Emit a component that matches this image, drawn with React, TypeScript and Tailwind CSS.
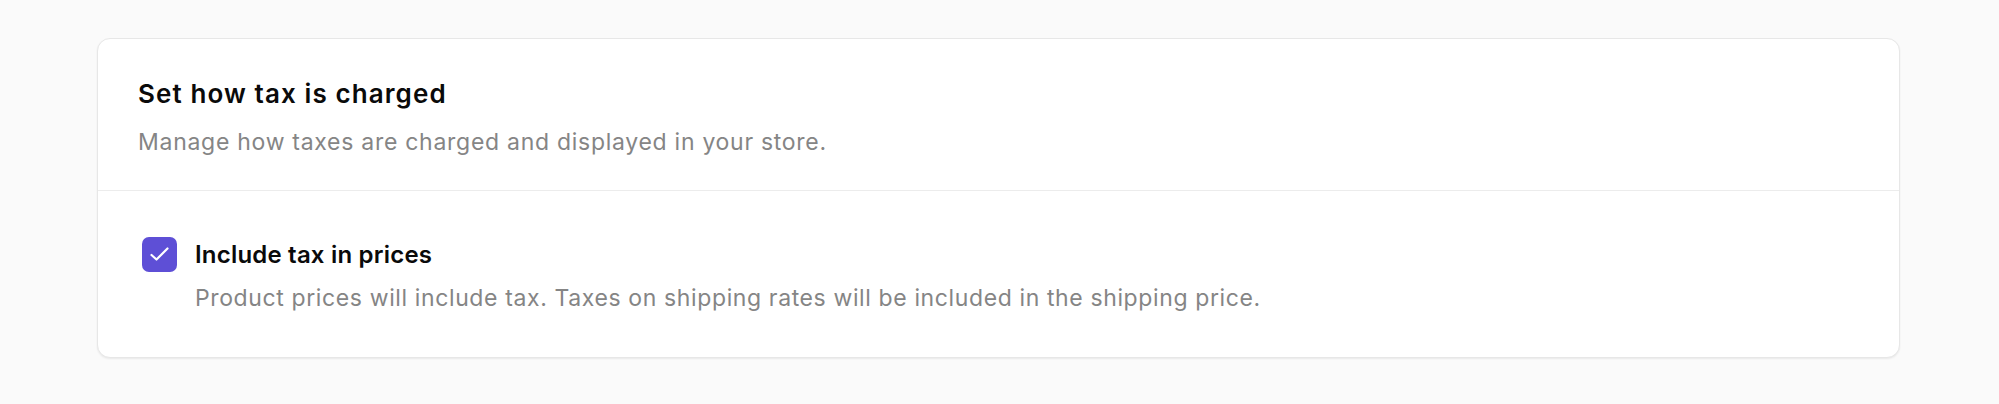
import React from 'react';

const CheckIcon: React.FC = () => (
    <svg width="35" height="35" viewBox="0 0 35 35" fill="none">
        <path d="M9.5 18L14.5 22.5L25.5 11.5" stroke="white" strokeWidth="2.2" strokeLinecap="round" strokeLinejoin="round" />
    </svg>
);

const TaxSettingsCard: React.FC = () => {
    return (
        <div className="bg-white border border-[#e7e7e7] rounded-[13px] shadow-[0_1px_2px_rgba(0,0,0,0.07)]">
            {/* Header */}
            <div className="px-[40px] pt-[38px] pb-[32px] border-b border-[#ececec]">
                <h2 className="text-[26px] leading-[34px] font-semibold text-[#0a0a0a] tracking-[1.1px]">
                    Set how tax is charged
                </h2>
                <p className="mt-[15px] text-[23px] leading-[32px] text-[#858585] tracking-[0.72px]">
                    Manage how taxes are charged and displayed in your store.
                </p>
            </div>

            {/* Option */}
            <div className="px-[40px] pt-[46px] pb-[43px]">
                <div className="flex gap-[18px]">
                    <div className="pl-[4px]">
                        <div className="w-[35px] h-[35px] rounded-[7px] bg-[#5e4fd6] flex items-center justify-center">
                            <CheckIcon />
                        </div>
                    </div>
                    <div>
                        <div className="text-[24px] leading-[35px] font-semibold text-[#0a0a0a] tracking-[0.2px]">
                            Include tax in prices
                        </div>
                        <div className="mt-[10px] text-[23px] leading-[32px] text-[#858585] tracking-[0.62px]">
                            Product prices will include tax. Taxes on shipping rates will be included in the shipping price.
                        </div>
                    </div>
                </div>
            </div>
        </div>
    );
};

export default function App() {
    return (
        <div
            className="min-h-screen bg-[#fafafa] pl-[97px] pr-[99px] pt-[38px]"
            style={{ fontFamily: 'Inter, "Noto Sans", sans-serif' }}
        >
            <TaxSettingsCard />
        </div>
    );
}
